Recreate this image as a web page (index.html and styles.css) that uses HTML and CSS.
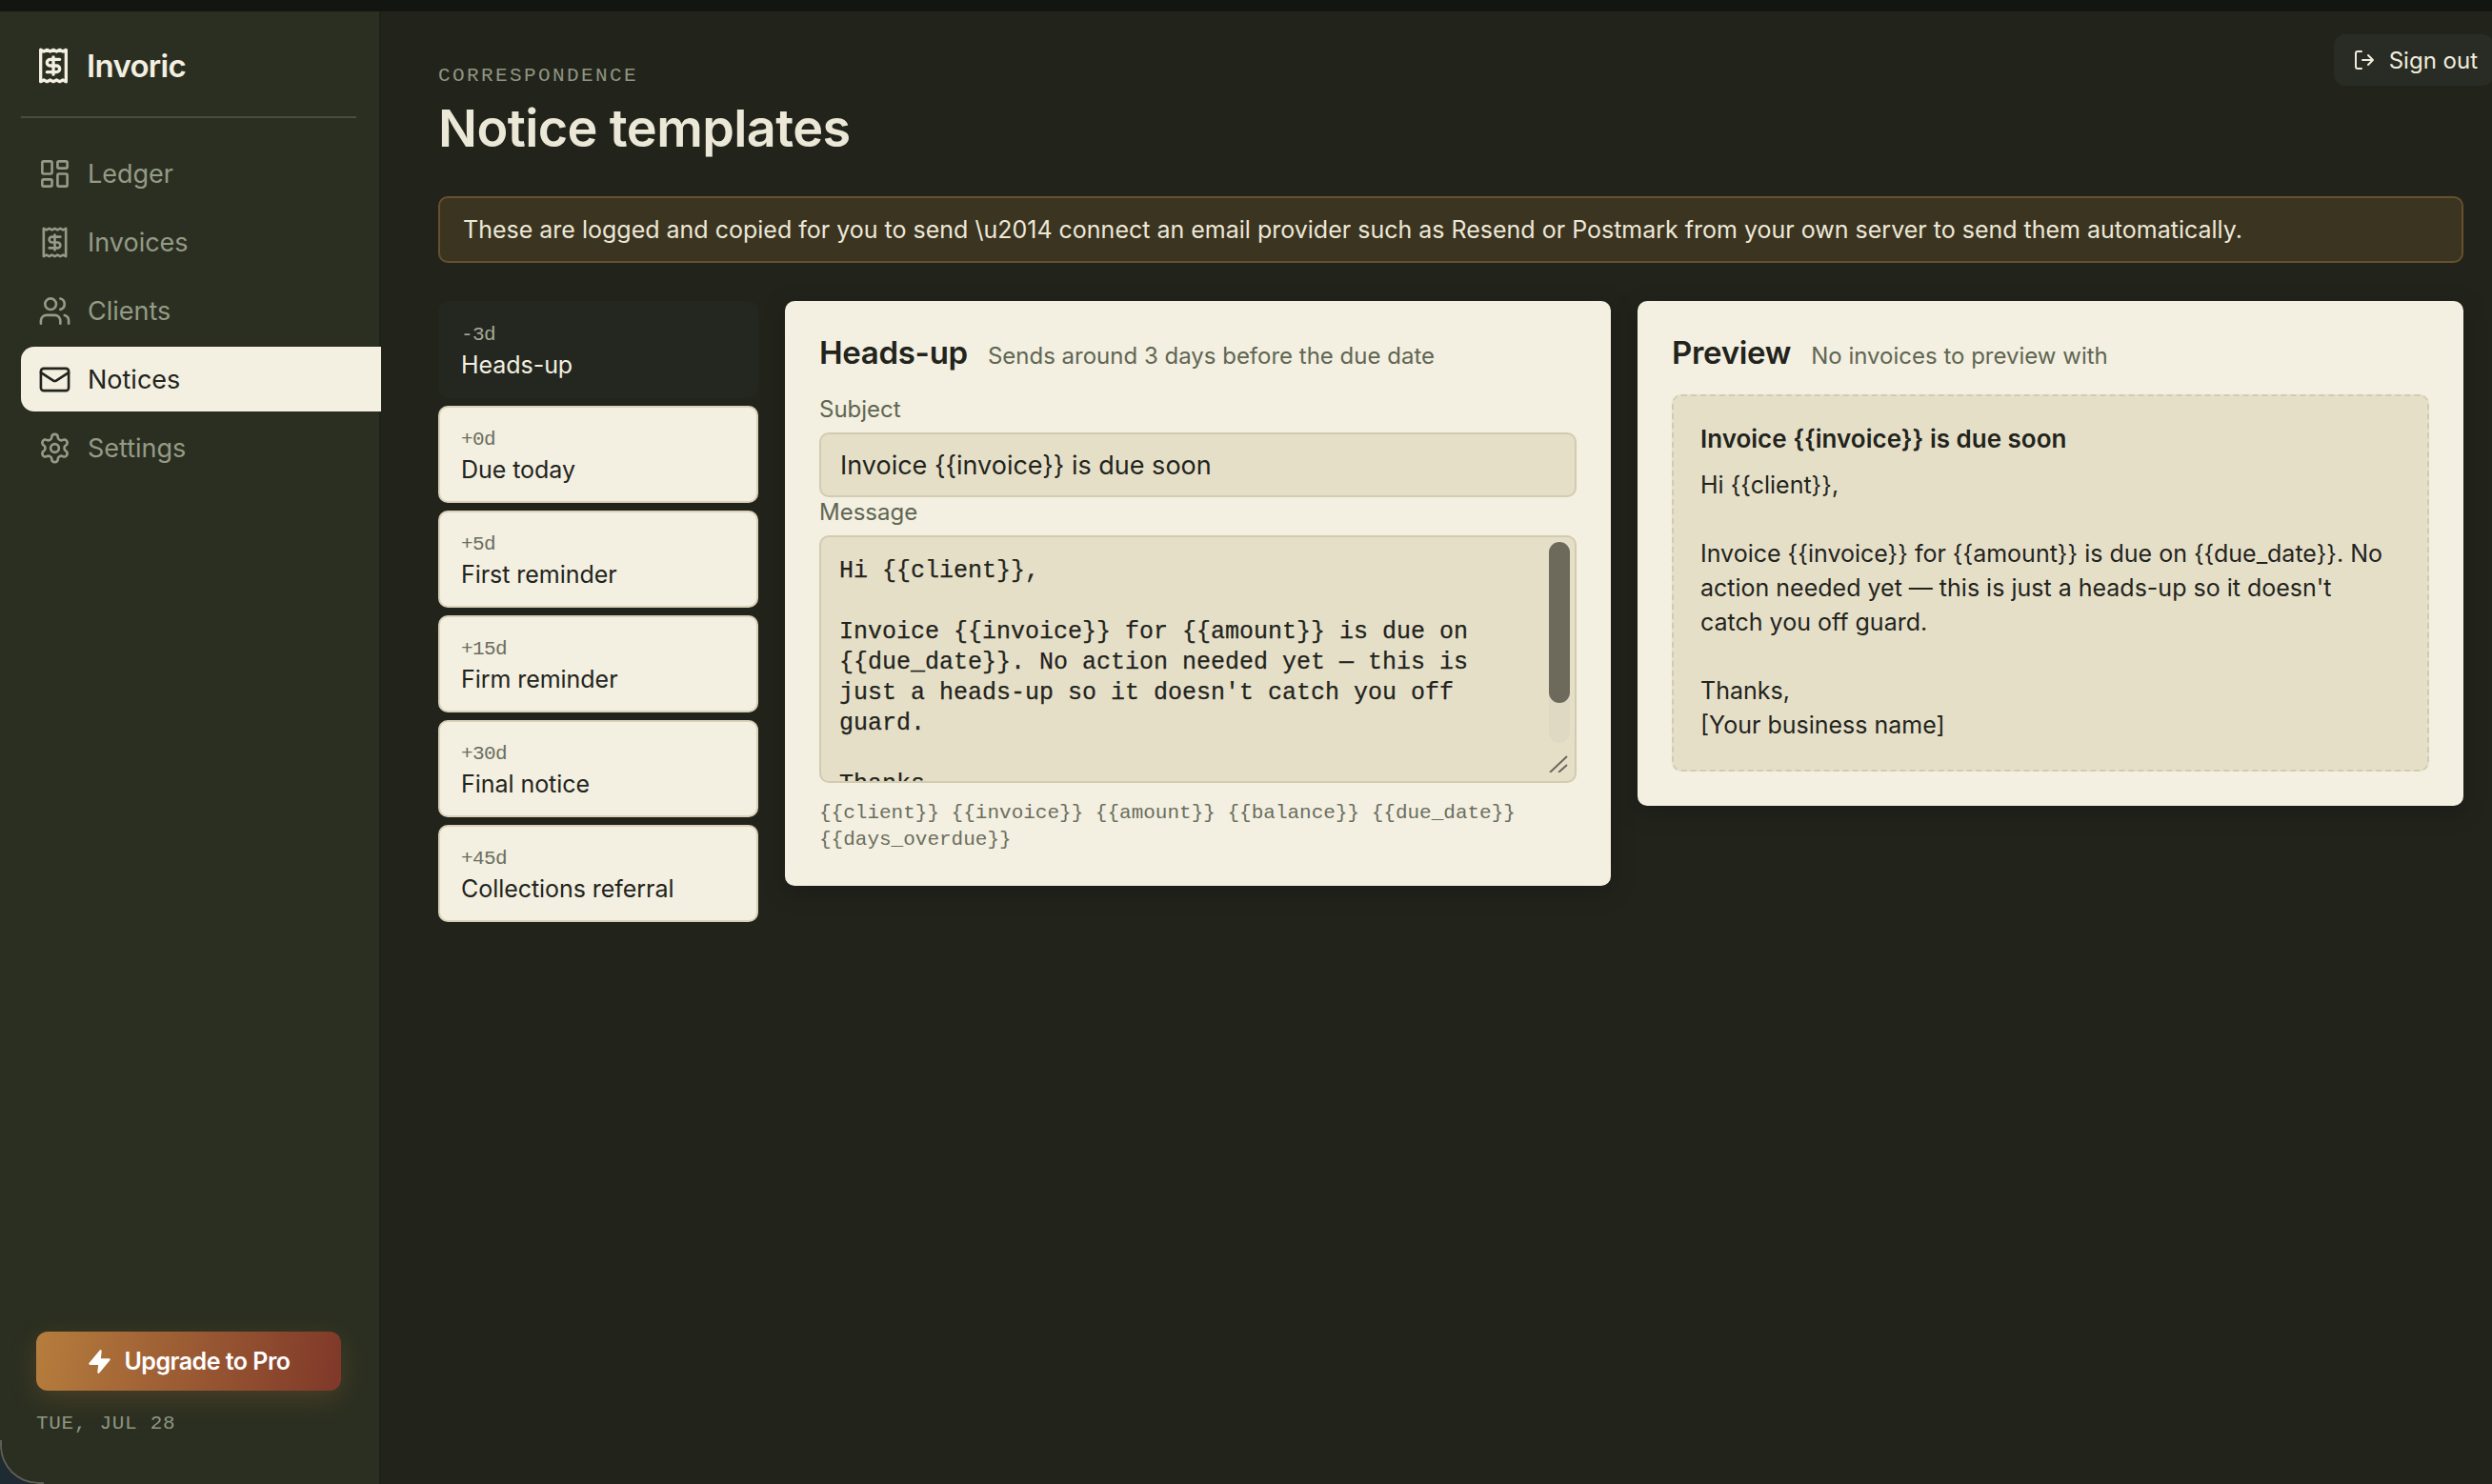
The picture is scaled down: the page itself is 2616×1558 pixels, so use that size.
FILE: index.html
```html
<!DOCTYPE html>
<html lang="en">
<head>
<meta charset="utf-8">
<title>Invoric - Notice templates</title>
<link rel="stylesheet" href="styles.css">
</head>
<body>
<div class="topbar"></div>
<div class="app">
  <aside class="sidebar">
    <div class="brand">
      <svg class="brand-icon" viewBox="0 0 24 24" fill="none" stroke="currentColor" stroke-width="2" stroke-linejoin="round" stroke-linecap="round"><path d="M4 2v20l2-1 2 1 2-1 2 1 2-1 2 1 2-1 2 1V2l-2 1-2-1-2 1-2-1-2 1-2-1-2 1Z"/><path d="M16 8h-6a2 2 0 1 0 0 4h4a2 2 0 1 1 0 4H8M12 17.5v-11"/></svg>
      <span class="brand-name">Invoric</span>
    </div>
    <nav class="nav">
      <a class="nav-item"><svg viewBox="0 0 24 24" fill="none" stroke="currentColor" stroke-width="1.8" stroke-linejoin="round"><rect x="3" y="3" width="7" height="9" rx="1"/><rect x="14" y="3" width="7" height="5" rx="1"/><rect x="14" y="12" width="7" height="9" rx="1"/><rect x="3" y="16" width="7" height="5" rx="1"/></svg><span>Ledger</span></a>
      <a class="nav-item"><svg viewBox="0 0 24 24" fill="none" stroke="currentColor" stroke-width="1.8" stroke-linejoin="round" stroke-linecap="round"><path d="M4 2v20l2-1 2 1 2-1 2 1 2-1 2 1 2-1 2 1V2l-2 1-2-1-2 1-2-1-2 1-2-1-2 1Z"/><path d="M16 8h-6a2 2 0 1 0 0 4h4a2 2 0 1 1 0 4H8M12 17.5v-11"/></svg><span>Invoices</span></a>
      <a class="nav-item"><svg viewBox="0 0 24 24" fill="none" stroke="currentColor" stroke-width="1.8" stroke-linejoin="round" stroke-linecap="round"><path d="M16 21v-2a4 4 0 0 0-4-4H6a4 4 0 0 0-4 4v2"/><circle cx="9" cy="7" r="4"/><path d="M22 21v-2a4 4 0 0 0-3-3.87M16 3.13a4 4 0 0 1 0 7.75"/></svg><span>Clients</span></a>
      <a class="nav-item nav-item-active"><svg viewBox="0 0 24 24" fill="none" stroke="currentColor" stroke-width="1.8" stroke-linejoin="round" stroke-linecap="round"><rect x="2" y="4" width="20" height="16" rx="2"/><path d="m22 7-8.97 5.7a1.94 1.94 0 0 1-2.06 0L2 7"/></svg><span>Notices</span></a>
      <a class="nav-item"><svg viewBox="0 0 24 24" fill="none" stroke="currentColor" stroke-width="1.8" stroke-linejoin="round" stroke-linecap="round"><path d="M12.22 2h-.44a2 2 0 0 0-2 2v.18a2 2 0 0 1-1 1.73l-.43.25a2 2 0 0 1-2 0l-.15-.08a2 2 0 0 0-2.73.73l-.22.38a2 2 0 0 0 .73 2.73l.15.1a2 2 0 0 1 1 1.72v.51a2 2 0 0 1-1 1.74l-.15.09a2 2 0 0 0-.73 2.73l.22.38a2 2 0 0 0 2.73.73l.15-.08a2 2 0 0 1 2 0l.43.25a2 2 0 0 1 1 1.73V20a2 2 0 0 0 2 2h.44a2 2 0 0 0 2-2v-.18a2 2 0 0 1 1-1.73l.43-.25a2 2 0 0 1 2 0l.15.08a2 2 0 0 0 2.73-.73l.22-.39a2 2 0 0 0-.73-2.73l-.15-.08a2 2 0 0 1-1-1.74v-.5a2 2 0 0 1 1-1.74l.15-.09a2 2 0 0 0 .73-2.73l-.22-.38a2 2 0 0 0-2.73-.73l-.15.08a2 2 0 0 1-2 0l-.43-.25a2 2 0 0 1-1-1.73V4a2 2 0 0 0-2-2z"/><circle cx="12" cy="12" r="3"/></svg><span>Settings</span></a>
    </nav>
    <div class="sidebar-foot">
      <button class="upgrade"><svg viewBox="0 0 24 24" fill="currentColor" stroke="currentColor" stroke-width="2" stroke-linejoin="round"><path d="M13 2 3 14h9l-1 8 10-12h-9l1-8Z"/></svg><span>Upgrade to Pro</span></button>
      <div class="date">TUE, JUL 28</div>
    </div>
  </aside>
  <main class="main">
    <button class="signout"><svg viewBox="0 0 24 24" fill="none" stroke="currentColor" stroke-width="2" stroke-linecap="round" stroke-linejoin="round"><path d="M9 3H5a2 2 0 0 0-2 2v14a2 2 0 0 0 2 2h4"/><path d="M10 12h11M16 7l5 5-5 5"/></svg><span>Sign out</span></button>
    <div class="eyebrow">CORRESPONDENCE</div>
    <h1 class="title">Notice templates</h1>
    <div class="banner">These are logged and copied for you to send \u2014 connect an email provider such as Resend or Postmark from your own server to send them automatically.</div>
    <div class="columns">
      <div class="tlist">
        <div class="titem titem-active"><span class="tday">-3d</span><span class="tname">Heads-up</span></div>
        <div class="titem"><span class="tday">+0d</span><span class="tname">Due today</span></div>
        <div class="titem"><span class="tday">+5d</span><span class="tname">First reminder</span></div>
        <div class="titem"><span class="tday">+15d</span><span class="tname">Firm reminder</span></div>
        <div class="titem"><span class="tday">+30d</span><span class="tname">Final notice</span></div>
        <div class="titem"><span class="tday">+45d</span><span class="tname">Collections referral</span></div>
      </div>
      <section class="card card-editor">
        <div class="card-head"><h2 class="card-title">Heads-up</h2><span class="card-sub">Sends around 3 days before the due date</span></div>
        <label class="field-label">Subject</label>
        <div class="input">Invoice {{invoice}} is due soon</div>
        <label class="field-label field-label-msg">Message</label>
        <div class="textarea">
          <div class="textarea-text">Hi {{client}},

Invoice {{invoice}} for {{amount}} is due on {{due_date}}. No action needed yet — this is just a heads-up so it doesn't catch you off guard.

Thanks,
[Your business name]</div>
          <div class="scroll-track"><div class="scroll-thumb"></div></div>
          <svg class="grip" viewBox="0 0 20 18" fill="none" stroke="#6a675a" stroke-width="2"><path d="M1 18 19 1M10 18l9-8"/></svg>
        </div>
        <p class="hints">{{client}} {{invoice}} {{amount}} {{balance}} {{due_date}} {{days_overdue}}</p>
      </section>
      <section class="card card-preview">
        <div class="card-head card-head-preview"><h2 class="card-title">Preview</h2><span class="card-sub">No invoices to preview with</span></div>
        <div class="preview-box">
          <div class="preview-subject">Invoice {{invoice}} is due soon</div>
          <div class="preview-body">Hi {{client}},

Invoice {{invoice}} for {{amount}} is due on {{due_date}}. No action needed yet — this is just a heads-up so it doesn't catch you off guard.

Thanks,
[Your business name]</div>
        </div>
      </section>
    </div>
  </main>
</div>
</body>
</html>
```
FILE: styles.css
```css
* { box-sizing: border-box; }
html, body { margin: 0; height: 100%; }
body {
  background: #1f2b33;
  font-family: Inter, "Noto Sans", sans-serif;
  overflow: hidden;
}
.topbar { height: 12px; background: #131510; }
.app {
  position: relative;
  display: flex;
  height: 1546px;
  background: #22241c;
  border-bottom-left-radius: 40px;
  overflow: hidden;
}
.app::after {
  content: "";
  position: absolute;
  left: 0;
  bottom: 0;
  width: 44px;
  height: 44px;
  border-left: 2px solid #5c5f55;
  border-bottom: 2px solid #5c5f55;
  border-bottom-left-radius: 40px;
  pointer-events: none;
}
.sidebar {
  width: 400px;
  flex: none;
  background: #2b2f21;
  border-right: 2px solid #1f2119;
  display: flex;
  flex-direction: column;
  padding: 0 0 0 22px;
}
.brand {
  display: flex;
  align-items: center;
  gap: 15px;
  height: 112px;
  width: 352px;
  padding: 4px 0 0 14px;
  border-bottom: 2px solid #4a4d3e;
  color: #f3efe1;
}
.brand-icon { width: 40px; height: 40px; flex: none; }
.brand-name { font-size: 33px; font-weight: 600; letter-spacing: -0.7px; }
.nav { display: flex; flex-direction: column; gap: 4px; margin-top: 24px; }
.nav-item {
  display: flex;
  align-items: center;
  gap: 17px;
  height: 68px;
  padding-left: 18px;
  margin-right: -2px;
  font-size: 27px;
  color: #949b86;
  border-radius: 14px 0 0 14px;
}
.nav-item svg { width: 35px; height: 35px; flex: none; }
.nav-item-active { background: #f3efe1; color: #22241c; }
.sidebar-foot { margin-top: auto; padding: 0 0 50px 16px; }
.upgrade {
  display: flex;
  align-items: center;
  justify-content: center;
  gap: 12px;
  width: 320px;
  height: 62px;
  border: 0;
  border-radius: 12px;
  background: linear-gradient(100deg, #b67d3d 0%, #7f3829 100%);
  box-shadow: 0 8px 28px rgba(182, 125, 61, 0.22);
  color: #fff;
  font-family: Inter, sans-serif;
  font-size: 25px;
  font-weight: 600;
  letter-spacing: -0.5px;
}
.upgrade svg { width: 27px; height: 27px; flex: none; }
.date {
  margin-top: 22px;
  font-family: "Liberation Mono", monospace;
  font-size: 21px;
  line-height: 26px;
  letter-spacing: 0.7px;
  color: #8f9681;
}
.main { flex: 1; position: relative; padding: 0 30px 0 60px; min-width: 0; }
.signout {
  position: absolute;
  top: 24px;
  right: -2px;
  display: flex;
  align-items: center;
  gap: 14px;
  height: 54px;
  padding: 0 17px 0 20px;
  border: 0;
  border-radius: 12px;
  background: #292c24;
  color: #f0ecdd;
  font-family: Inter, sans-serif;
  font-size: 24px;
}
.signout svg { width: 24px; height: 24px; flex: none; }
.eyebrow {
  margin-top: 55px;
  font-family: "Liberation Mono", monospace;
  font-size: 21px;
  line-height: 26px;
  letter-spacing: 2.4px;
  color: #8f9681;
}
.title {
  margin: 8px 0 0;
  font-size: 54px;
  line-height: 68px;
  font-weight: 600;
  letter-spacing: -0.6px;
  color: #ece8d8;
}
.banner {
  margin-top: 37px;
  height: 70px;
  display: flex;
  align-items: center;
  padding: 0 24px;
  background: #3b3420;
  border: 2px solid #66512c;
  border-radius: 10px;
  font-size: 25px;
  color: #ece8d8;
}
.columns { display: flex; align-items: flex-start; margin-top: 40px; gap: 28px; }
.tlist { width: 336px; flex: none; display: flex; flex-direction: column; gap: 8px; }
.titem {
  display: flex;
  flex-direction: column;
  height: 102px;
  padding: 21px 22px 0;
  background: #f3efe1;
  border: 2px solid #d9d2b8;
  border-radius: 10px;
  color: #22241c;
}
.titem-active { background: #23271f; border-color: #23271f; color: #f3efe1; }
.tday {
  font-family: "Liberation Mono", monospace;
  font-size: 21px;
  line-height: 26px;
  letter-spacing: -0.6px;
  color: #6a6e5e;
}
.titem-active .tday { color: #a6a997; }
.tname { font-size: 25px; line-height: 36px; letter-spacing: -0.05px; }
.card {
  background: #f3efe1;
  border-radius: 10px;
  padding: 36px;
  box-shadow: 0 6px 24px rgba(0, 0, 0, 0.25);
  color: #22241c;
}
.card-editor { width: 867px; flex: none; height: 614px; }
.card-preview { flex: 1; min-width: 0; height: 530px; }
.card-head { display: flex; align-items: baseline; gap: 21px; height: 40px; }
.card-head-preview { height: 62px; }
.card-title { margin: 0; font-size: 33px; line-height: 37px; font-weight: 600; letter-spacing: -0.3px; }
.card-sub { font-size: 24px; color: #606652; }
.field-label { display: block; margin-top: 22px; font-size: 24px; line-height: 32px; color: #606652; }
.field-label-msg { margin-top: 0; }
.input {
  margin-top: 8px;
  height: 68px;
  display: flex;
  align-items: center;
  padding: 0 20px;
  background: #e6dfc8;
  border: 2px solid #d2cbaf;
  border-radius: 10px;
  font-size: 27px;
}
.textarea {
  position: relative;
  margin-top: 8px;
  height: 260px;
  background: #e6dfc8;
  border: 2px solid #d2cbaf;
  border-radius: 10px;
  overflow: hidden;
}
.textarea-text {
  padding: 20px 58px 0 19px;
  font-family: "Liberation Mono", monospace;
  font-size: 25px;
  line-height: 32px;
  white-space: pre-wrap;
  -webkit-text-stroke: 0.25px currentColor;
}
.scroll-track {
  position: absolute;
  top: 5px;
  right: 5px;
  width: 22px;
  height: 211px;
  border-radius: 11px;
  background: #dfd9c3;
}
.scroll-thumb { height: 169px; border-radius: 11px; background: #6d6a5c; }
.grip { position: absolute; right: 7px; bottom: 9px; width: 20px; height: 18px; }
.hints {
  margin: 18px 0 0;
  font-family: "Liberation Mono", monospace;
  font-size: 21px;
  line-height: 28px;
  color: #6a6e5e;
}
.preview-box {
  padding: 27px 28px 0;
  height: 396px;
  background: #e6dfc8;
  border: 2px dashed #d2cbaf;
  border-radius: 10px;
  font-size: 25px;
}
.preview-subject { font-size: 26px; font-weight: 600; line-height: 36px; }
.preview-body { margin-top: 12px; line-height: 36px; white-space: pre-wrap; }
```
